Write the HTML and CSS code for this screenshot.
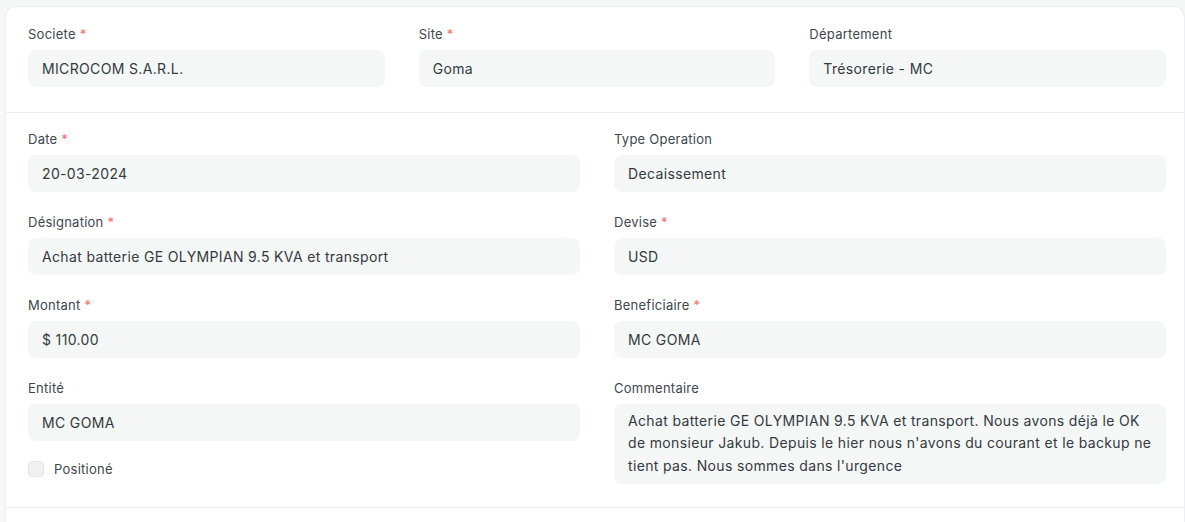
FILE: index.html
```html
<!DOCTYPE html>
<html lang="fr">
<head>
<meta charset="utf-8">
<link rel="stylesheet" href="styles.css">
</head>
<body>
<div class="page">
  <div class="card">
    <section class="section first">
      <div class="grid cols-3">
        <div class="field">
          <label class="label">Societe <span class="req">*</span></label>
          <div class="control">MICROCOM S.A.R.L.</div>
        </div>
        <div class="field">
          <label class="label">Site <span class="req">*</span></label>
          <div class="control">Goma</div>
        </div>
        <div class="field">
          <label class="label">Département</label>
          <div class="control">Trésorerie - MC</div>
        </div>
      </div>
    </section>
    <section class="section second">
      <div class="grid cols-2">
        <div class="column">
          <div class="field">
            <label class="label">Date <span class="req">*</span></label>
            <div class="control">20-03-2024</div>
          </div>
          <div class="field">
            <label class="label">Désignation <span class="req">*</span></label>
            <div class="control">Achat batterie GE OLYMPIAN 9.5 KVA et transport</div>
          </div>
          <div class="field">
            <label class="label">Montant <span class="req">*</span></label>
            <div class="control">$ 110.00</div>
          </div>
          <div class="field">
            <label class="label">Entité</label>
            <div class="control">MC GOMA</div>
          </div>
          <div class="check">
            <span class="box"></span>
            <span class="check-label">Positioné</span>
          </div>
        </div>
        <div class="column">
          <div class="field">
            <label class="label">Type Operation</label>
            <div class="control">Decaissement</div>
          </div>
          <div class="field">
            <label class="label">Devise <span class="req">*</span></label>
            <div class="control">USD</div>
          </div>
          <div class="field">
            <label class="label">Beneficiaire <span class="req">*</span></label>
            <div class="control">MC GOMA</div>
          </div>
          <div class="field">
            <label class="label">Commentaire</label>
            <div class="control textarea">Achat batterie GE OLYMPIAN 9.5 KVA et transport. Nous avons déjà le OK de monsieur Jakub. Depuis le hier nous n'avons du courant et le backup ne tient pas. Nous sommes dans l'urgence</div>
          </div>
        </div>
      </div>
    </section>
  </div>
</div>
</body>
</html>
```

FILE: styles.css
```css
html, body {
  margin: 0;
  padding: 0;
  overflow: hidden;
}
body {
  background: #f6f7f7;
  font-family: Inter, "Noto Sans", sans-serif;
  color: #333a41;
  -webkit-font-smoothing: antialiased;
}
.page {
  padding: 7px 0 0 6px;
}
.card {
  width: 1178px;
  background: #ffffff;
  border-radius: 10px 10px 0 0;
  box-shadow: 0 0 0 1px #eceeef, 0 1px 3px rgba(0,0,0,0.04);
  min-height: 540px;
}
.section {
  border-bottom: 1px solid #edeeef;
}
.section.first {
  padding: 19px 18px 25px 22px;
}
.section.second {
  padding: 18px 18px 23px 22px;
}
.grid {
  display: grid;
  column-gap: 34px;
}
.cols-3 { grid-template-columns: repeat(3, 1fr); }
.cols-2 { grid-template-columns: repeat(2, 1fr); }
.column {
  display: flex;
  flex-direction: column;
  gap: 22px;
}
.field {
  display: flex;
  flex-direction: column;
  gap: 7px;
}
.label {
  font-size: 13px;
  line-height: 17px;
  letter-spacing: 0.25px;
  color: #40474e;
}
.req {
  color: #f0706a;
}
.control {
  background: #f5f6f6;
  border-radius: 8px;
  height: 37px;
  line-height: 37px;
  padding: 0 13px 0 14px;
  font-size: 14px;
  letter-spacing: 0.35px;
  color: #333a41;
  white-space: nowrap;
  overflow: hidden;
}
.control.textarea {
  height: auto;
  white-space: normal;
  line-height: 22.4px;
  padding: 6px 13px 7px 14px;
}
.check {
  display: flex;
  align-items: center;
  gap: 10px;
  margin-top: -2px;
  height: 16px;
}
.box {
  width: 14px;
  height: 14px;
  border: 1px solid #e2e4e6;
  background: #eef0f1;
  border-radius: 4px;
}
.check-label {
  font-size: 13px;
  letter-spacing: 0.25px;
  color: #40474e;
}
```
